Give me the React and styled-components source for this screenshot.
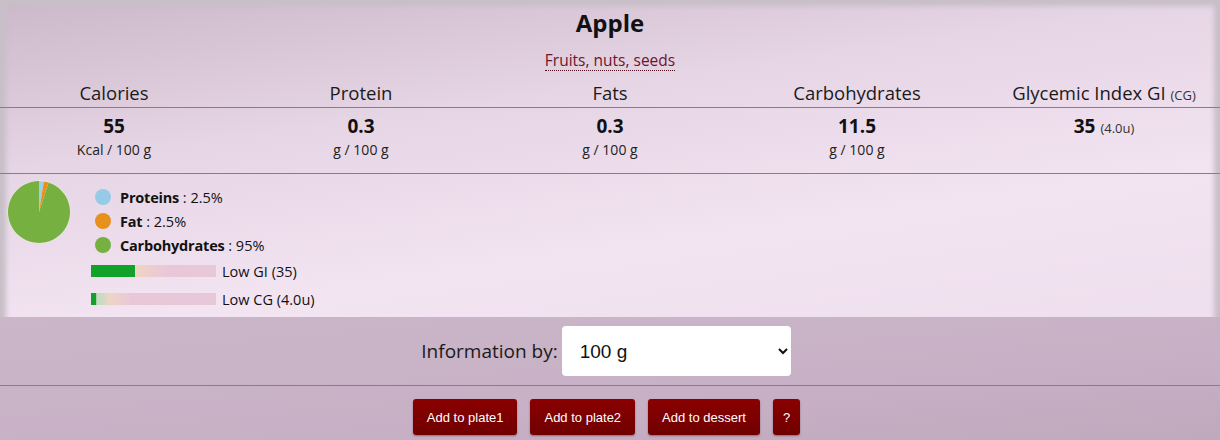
import React, { useState } from 'react';
import styled, { createGlobalStyle } from 'styled-components';

const GlobalStyle = createGlobalStyle`
  html, body {
    margin: 0;
    padding: 0;
    background: #c9c0c9;
  }
  body {
    font-family: 'Open Sans', 'Liberation Sans', sans-serif;
    color: #111;
  }
`;

const Page = styled.div`
  width: 1220px;
  height: 440px;
  overflow: hidden;
  background: linear-gradient(172deg, #cbb8c9 0%, #e6d5e5 28%, #f3e4f2 55%, #ecdcec 100%);
  box-shadow: inset 0 0 5px 6px #c8bfc8;
`;

const Head = styled.div`
  text-align: center;
  padding-top: 7px;
`;

const Title = styled.h1`
  margin: 0;
  font-size: 24px;
  line-height: 32px;
  font-weight: 700;
  color: #111;
`;

const Category = styled.a`
  display: inline-block;
  margin-top: 12px;
  font-size: 15.5px;
  line-height: 19px;
  color: #6e1428;
  text-decoration: none;
  border-bottom: 1px dotted #4a1020;
`;

const NutrientGrid = styled.div`
  display: grid;
  grid-template-columns: 228px 266px 232px 262px 1fr;
  margin-top: 10px;
`;

const HeaderCell = styled.div`
  text-align: center;
  font-size: 18.5px;
  line-height: 23px;
  border-bottom: 1px solid #8a7b88;
  white-space: nowrap;
  color: #1a1a1a;
`;

const Small = styled.span`
  font-size: 13px;
  font-weight: 400;
  color: #333;
`;

const ValueCell = styled.div`
  text-align: center;
  padding-top: 7px;
  height: 58px;
  border-bottom: 1px solid #8a7b88;
`;

const Value = styled.div`
  font-size: 19px;
  font-weight: 700;
  line-height: 22px;
  color: #111;
`;

const Unit = styled.div`
  font-size: 14px;
  line-height: 19px;
  margin-top: 3px;
  color: #222;
`;

const Chart = styled.div`
  display: flex;
  align-items: flex-start;
  height: 143px;
  padding: 6px 0 0 7px;
  box-sizing: border-box;
`;

const Legend = styled.div`
  display: flex;
  flex-direction: column;
  padding-top: 5px;
  margin-left: 18px;
`;

const LegendRow = styled.div`
  display: flex;
  align-items: center;
  height: 24px;
  margin-left: 6px;
  font-size: 14.5px;
`;

const Dot = styled.span`
  width: 16px;
  height: 16px;
  border-radius: 50%;
  background: ${p => p.color};
  margin-right: 9px;
`;

const LegendName = styled.b`
  font-weight: 700;
  letter-spacing: -0.2px;
`;

const BarRow = styled.div`
  display: flex;
  align-items: center;
  height: 28px;
  margin-left: 2px;
  font-size: 14.5px;
  &:first-of-type { margin-top: 4px; }
`;

const Bar = styled.div`
  width: 125px;
  height: 12px;
  margin-right: 6px;
  background: ${p => p.fill};
`;

const Footer = styled.div`
  background: linear-gradient(175deg, #cbb6c9 0%, #c7b0c5 60%, #bda7bb 100%);
`;

const SelectRow = styled.div`
  display: flex;
  justify-content: center;
  align-items: center;
  gap: 4px;
  height: 68px;
  padding-right: 8px;
  border-bottom: 1px solid #8a7b88;
  font-size: 19px;
  color: #1a1a1a;
`;

const Select = styled.select`
  width: 229px;
  height: 50px;
  border: none;
  border-radius: 4px;
  background: #fff;
  padding: 0 10px 0 14px;
  font-family: 'Liberation Sans', Arial, sans-serif;
  font-size: 19px;
  color: #111;
`;

const Buttons = styled.div`
  display: flex;
  justify-content: center;
  gap: 13px;
  padding: 13px 7px 0 0;
  height: 60px;
`;

const Button = styled.button`
  height: 36px;
  padding: 0 ${p => (p.narrow ? '10px' : '14px')};
  border: none;
  border-radius: 3px;
  background: linear-gradient(#8a0000, #700000);
  color: #fff;
  font-family: 'Liberation Sans', Arial, sans-serif;
  font-size: 13px;
  box-shadow: 0 1px 2px rgba(60, 0, 0, 0.4);
  cursor: pointer;
`;

const Pie = () => {
  const r = 31;
  const cx = 32;
  const cy = 32;
  const pt = deg => {
    const a = (deg - 90) * Math.PI / 180;
    return `${cx + r * Math.cos(a)} ${cy + r * Math.sin(a)}`;
  };
  const slice = (from, to) => `M${cx} ${cy} L${pt(from)} A${r} ${r} 0 ${to - from > 180 ? 1 : 0} 1 ${pt(to)} Z`;
  return (
    <svg width="64" height="66" viewBox="0 0 64 66">
      <circle cx={cx} cy={cy} r={r + 0.5} fill="#eaf0d8" />
      <path d={slice(18, 360)} fill="#76b041" />
      <path d={slice(0, 9)} fill="#9dd0e8" />
      <path d={slice(9, 18)} fill="#e8901c" />
    </svg>
  );
};

const nutrients = [
  { label: 'Calories', value: '55', unit: 'Kcal / 100 g' },
  { label: 'Protein', value: '0.3', unit: 'g / 100 g' },
  { label: 'Fats', value: '0.3', unit: 'g / 100 g' },
  { label: 'Carbohydrates', value: '11.5', unit: 'g / 100 g' },
];

export default function App() {
  const [amount, setAmount] = useState('100');

  return (
    <Page>
      <GlobalStyle />
      <Head>
        <Title>Apple</Title>
        <Category href="#">Fruits, nuts, seeds</Category>
      </Head>

      <NutrientGrid>
        {nutrients.map(n => <HeaderCell key={n.label}>{n.label}</HeaderCell>)}
        <HeaderCell>Glycemic Index GI <Small>(CG)</Small></HeaderCell>
        {nutrients.map(n => (
          <ValueCell key={n.label}>
            <Value>{n.value}</Value>
            <Unit>{n.unit}</Unit>
          </ValueCell>
        ))}
        <ValueCell>
          <Value>35 <Small>(4.0u)</Small></Value>
        </ValueCell>
      </NutrientGrid>

      <Chart>
        <Pie />
        <Legend>
          <LegendRow><Dot color="#95cbe6" /><LegendName>Proteins</LegendName>&nbsp;: 2.5%</LegendRow>
          <LegendRow><Dot color="#e8901c" /><LegendName>Fat</LegendName>&nbsp;: 2.5%</LegendRow>
          <LegendRow><Dot color="#76b041" /><LegendName>Carbohydrates</LegendName>&nbsp;: 95%</LegendRow>
          <BarRow>
            <Bar fill="linear-gradient(90deg, #12a22a 0 35%, #f0d4c4 35.5%, #ecccd0 50%, #e8c8d8 62%, #e8c8d8 100%)" />
            Low GI (35)
          </BarRow>
          <BarRow>
            <Bar fill="linear-gradient(90deg, #12a22a 0 4%, #c8dcc4 4.5%, #c8dcc4 9%, #f0d4c4 15%, #e8c8d8 32%, #e8c8d8 100%)" />
            Low CG (4.0u)
          </BarRow>
        </Legend>
      </Chart>

      <Footer>
        <SelectRow>
          <label htmlFor="amount">Information by:</label>
          <Select id="amount" value={amount} onChange={e => setAmount(e.target.value)}>
            <option value="100">100 g</option>
            <option value="portion">1 portion</option>
          </Select>
        </SelectRow>
        <Buttons>
          <Button>Add to plate1</Button>
          <Button>Add to plate2</Button>
          <Button>Add to dessert</Button>
          <Button narrow>?</Button>
        </Buttons>
      </Footer>
    </Page>
  );
}
